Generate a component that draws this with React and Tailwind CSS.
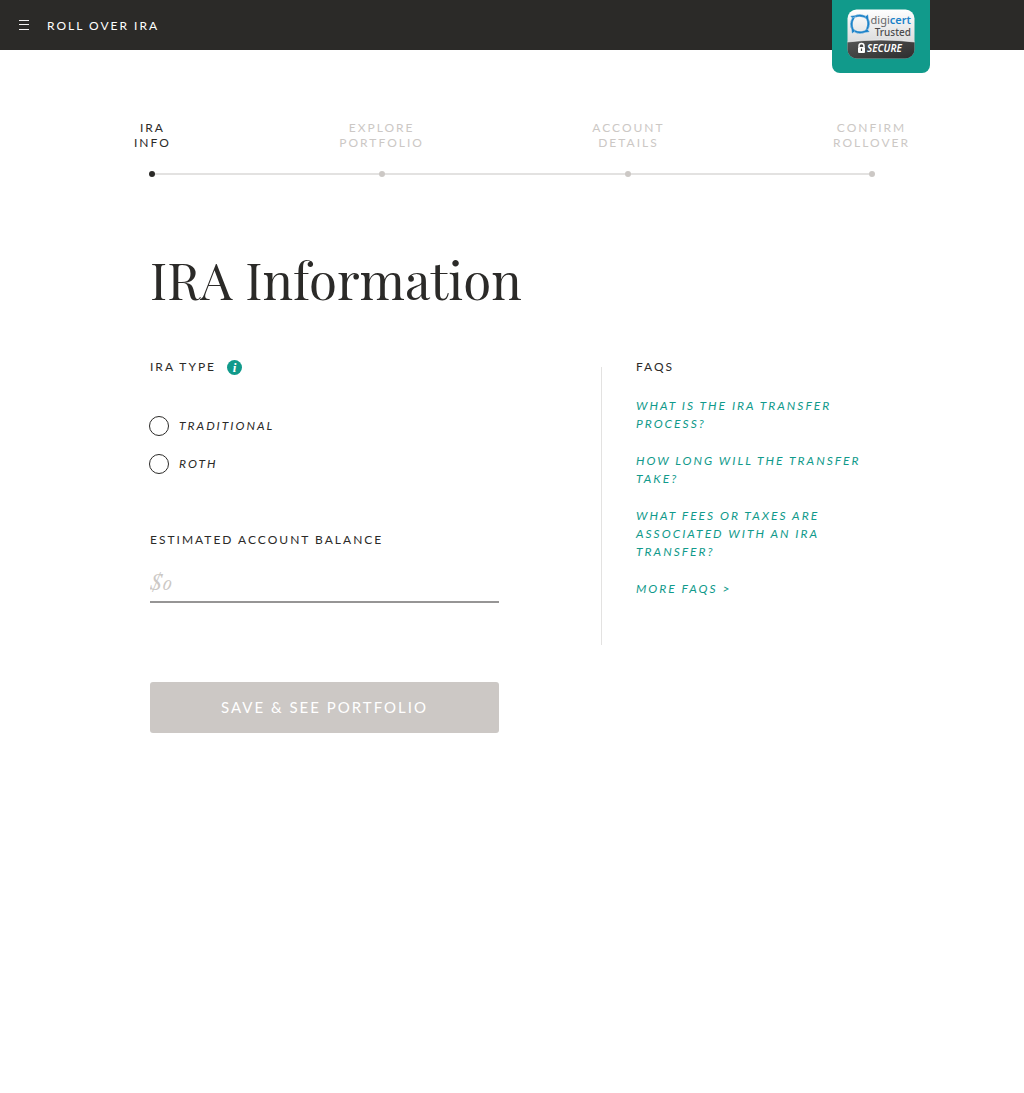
import { useState } from "react";

const steps = [
  { lines: ["IRA", "INFO"], active: true },
  { lines: ["EXPLORE", "PORTFOLIO"] },
  { lines: ["ACCOUNT", "DETAILS"] },
  { lines: ["CONFIRM", "ROLLOVER"] },
];

const faqs = [
  "WHAT IS THE IRA TRANSFER PROCESS?",
  "HOW LONG WILL THE TRANSFER TAKE?",
  "WHAT FEES OR TAXES ARE ASSOCIATED WITH AN IRA TRANSFER?",
  "MORE FAQS >",
];

const blade = "M3.200 7 L8 6.300 Q13 3.800 18.800 6.800 L20.300 10.600 Q15.500 7 10.500 8 Q7.500 8.600 6 10.300 Z";

function TrustSeal() {
  return (
    <svg width="68" height="50" viewBox="0 0 68 50" role="img" aria-label="Digicert Trusted Secure">
      <defs>
        <linearGradient id="plate" x1="0" y1="0" x2="0" y2="1">
          <stop offset="0" stopColor="#ffffff" />
          <stop offset="1" stopColor="#c9cacb" />
        </linearGradient>
        <linearGradient id="band" x1="0" y1="0" x2="1" y2="1">
          <stop offset="0" stopColor="#565656" />
          <stop offset="1" stopColor="#2c2c2c" />
        </linearGradient>
        <clipPath id="seal">
          <rect x="0.5" y="0.5" width="67" height="49" rx="9" />
        </clipPath>
      </defs>
      <g clipPath="url(#seal)">
        <rect width="68" height="50" fill="url(#plate)" />
        <path d="M0 33 Q34 29 68 33 V50 H0Z" fill="url(#band)" />
        <path d="M0 33 Q34 29 68 33" fill="none" stroke="#fff" strokeWidth="0.6" />
      </g>
      <g fill="#1b82c9" stroke="#f4f5f6" strokeWidth="0.400">
        <path d={blade} />
        <path d={blade} transform="rotate(90 13 15)" />
        <path d={blade} transform="rotate(180 13 15)" />
        <path d={blade} transform="rotate(270 13 15)" />
      </g>
      <g fontFamily="'Noto Sans', sans-serif">
        <text x="64" y="15" textAnchor="end" fontSize="11" fill="#65676a">
          digi<tspan fill="#1b82c9" fontWeight="600">cert</tspan>
        </text>
        <text x="64" y="27" textAnchor="end" fontSize="10" fontWeight="500" fill="#4b4b4d">Trusted</text>
        <text x="20" y="43" fontSize="10" fontWeight="600" fontStyle="italic" fill="#fff">SECURE</text>
      </g>
      <path d="M12 38 V37 A2.500 2.500 0 0 1 17 37 V38" fill="none" stroke="#fff" strokeWidth="1.500" />
      <rect x="11" y="38" width="7" height="6" rx="1" fill="#fff" />
      <path d="M14.500 39.500 V42" stroke="#444" strokeWidth="1.200" />
    </svg>
  );
}

export default function App() {
  const [type, setType] = useState("");
  const [balance, setBalance] = useState("");

  return (
    <div className="min-h-screen bg-white font-['Lato',sans-serif] text-xs text-[#2b2a28]">
      <header className="flex h-[50px] items-center bg-[#2b2a28] pr-[94px] pl-[19px] text-white">
        <button type="button" aria-label="Menu" className="mr-[18px]">
          <svg width="10" height="12" viewBox="0 0 10 12" stroke="#f2f2f2" strokeWidth="1.200">
            <path d="M0 1.500H10M0 5.500H10M0 10.500H10" />
          </svg>
        </button>
        <span className="flex-1 pt-0.5 tracking-[2px]">ROLL OVER IRA</span>
        <div className="flex h-[73px] w-[98px] justify-center self-start rounded-b-lg bg-[#119a8b] pt-[9px]">
          <TrustSeal />
        </div>
      </header>

      <main>
        <nav aria-label="Progress" className="relative mt-[70px] mr-[114px] ml-[134px]">
          <div className="absolute right-[39px] bottom-[2px] left-[19px] h-0.5 bg-[#e3e2e1]" />
          <ol className="relative flex justify-between">
            {steps.map(({ lines, active }) => (
              <li
                key={lines[1]}
                aria-current={active ? "step" : undefined}
                className={
                  active
                    ? "flex flex-col items-center text-center leading-[15px] tracking-[2px]"
                    : "flex flex-col items-center text-center leading-[15px] tracking-[2px] text-[#ccc8c5]"
                }
              >
                <span>{lines[0]}</span>
                <span>{lines[1]}</span>
                <span className="mt-[21px] size-1.5 rounded-full bg-current" />
              </li>
            ))}
          </ol>
        </nav>

        <div className="mt-[66px] mr-36 ml-[150px]">
          <h1 className="font-['Playfair_Display','Liberation_Serif',serif] text-[51px] leading-[72px]">IRA Information</h1>

          <div className="mt-11 flex">
            <form className="flex-1" onSubmit={(e) => e.preventDefault()}>
              <fieldset>
                <legend className="flex h-4 items-center tracking-[2px]">
                  IRA TYPE
                  <button
                    type="button"
                    aria-label="About IRA types"
                    className="ml-[11px] flex size-[15px] items-center justify-center rounded-full bg-[#119a8b] pt-px font-['Liberation_Serif',serif] text-[13px] leading-none font-bold tracking-normal text-white italic"
                  >
                    i
                  </button>
                </legend>
                <div className="mt-[41px] flex flex-col gap-[18px]">
                  {["TRADITIONAL", "ROTH"].map((name) => (
                    <label key={name} className="flex h-5 items-center gap-2.5 tracking-[2px] italic">
                      <input
                        type="radio"
                        name="ira-type"
                        checked={type === name}
                        onChange={() => setType(name)}
                        className="-ml-px size-5 appearance-none rounded-full border border-[#2b2a28] checked:bg-[#119a8b]"
                      />
                      {name}
                    </label>
                  ))}
                </div>
              </fieldset>

              <label htmlFor="balance" className="mt-[58px] block leading-4 tracking-[2px]">
                ESTIMATED ACCOUNT BALANCE
              </label>
              <input
                id="balance"
                type="text"
                placeholder="$0"
                value={balance}
                onChange={(e) => setBalance(e.target.value)}
                className="mt-[15px] block h-10 w-full border-b-2 border-[#969595] pb-0.5 font-['EB_Garamond','Cormorant_Garamond','Playfair_Display','Liberation_Serif',serif] text-2xl oldstyle-nums italic outline-none placeholder:text-[#ccc8c5]"
              />
              <button
                type="submit"
                className="mt-[79px] h-[51px] w-full rounded-[3px] bg-[#ccc8c5] text-[15px] tracking-[2px] text-white"
              >
                SAVE &amp; SEE PORTFOLIO
              </button>
            </form>

            <aside className="mt-2 ml-[102px] h-[278px] w-[279px] border-l border-[#e3e2e1] pl-[34px]">
              <h2 className="-mt-2 leading-4 tracking-[2px]">FAQS</h2>
              <ul className="mt-[22px] flex flex-col gap-[19px] leading-[18px] tracking-[2px] text-[#119a8b] italic">
                {faqs.map((q) => (
                  <li key={q}>
                    <a href="#faq" className="block">
                      {q}
                    </a>
                  </li>
                ))}
              </ul>
            </aside>
          </div>
        </div>
      </main>
    </div>
  );
}
